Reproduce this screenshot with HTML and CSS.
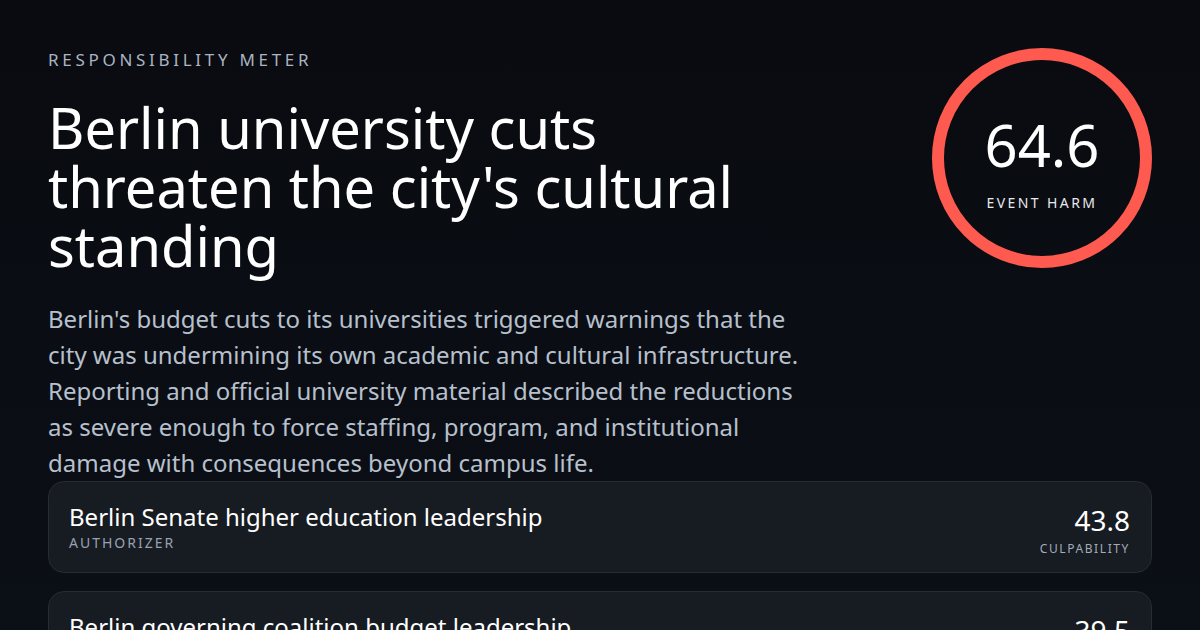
FILE: index.html
```html
<!DOCTYPE html>
<html lang="en">
<head>
<meta charset="utf-8">
<link rel="stylesheet" href="styles.css">
</head>
<body>
<main class="page">
  <section class="hero">
    <div class="intro">
      <div class="eyebrow">RESPONSIBILITY METER</div>
      <h1 class="title">Berlin university cuts threaten the city's cultural standing</h1>
      <p class="summary">Berlin's budget cuts to its universities triggered warnings that the city was undermining its own academic and cultural infrastructure. Reporting and official university material described the reductions as severe enough to force staffing, program, and institutional damage with consequences beyond campus life.</p>
    </div>
    <div class="meter">
      <div class="meter-value">64.6</div>
      <div class="meter-label">EVENT HARM</div>
    </div>
  </section>
  <section class="actors">
    <div class="actor">
      <div class="actor-info">
        <div class="actor-name">Berlin Senate higher education leadership</div>
        <div class="actor-role">AUTHORIZER</div>
      </div>
      <div class="actor-score">
        <div class="score-value">43.8</div>
        <div class="score-label">CULPABILITY</div>
      </div>
    </div>
    <div class="actor">
      <div class="actor-info">
        <div class="actor-name">Berlin governing coalition budget leadership</div>
        <div class="actor-role">DECISION MAKER</div>
      </div>
      <div class="actor-score">
        <div class="score-value">39.5</div>
        <div class="score-label">CULPABILITY</div>
      </div>
    </div>
  </section>
</main>
</body>
</html>
```
FILE: styles.css
```css
* { box-sizing: border-box; }
html, body { margin: 0; padding: 0; }
body {
  width: 1200px;
  height: 630px;
  overflow: hidden;
  background: linear-gradient(180deg, #090b10 0%, #0b0f16 100%);
  font-family: "Noto Sans", "DejaVu Sans", sans-serif;
  color: #ffffff;
}
.page {
  padding: 48px 48px 0 48px;
}
.hero {
  display: flex;
  justify-content: space-between;
  align-items: flex-start;
}
.intro {
  width: 780px;
}
.eyebrow {
  font-size: 17px;
  line-height: 24px;
  letter-spacing: 3.7px;
  color: #aab4c2;
}
.title {
  margin: 26px 0 0 0;
  font-size: 56px;
  line-height: 59px;
  font-weight: 400;
  color: #ffffff;
  width: 720px;
}
.summary {
  margin: 26px 0 0 0;
  font-size: 24px;
  line-height: 36px;
  color: #b7c0cd;
  width: 770px;
}
.meter {
  width: 220px;
  height: 220px;
  border-radius: 50%;
  border: 12px solid #ff5a50;
  display: flex;
  flex-direction: column;
  align-items: center;
  justify-content: center;
  flex-shrink: 0;
}
.meter-value {
  font-size: 58px;
  line-height: 64px;
  margin-top: 8px;
}
.meter-label {
  font-size: 14px;
  line-height: 19px;
  letter-spacing: 2.4px;
  margin-top: 16px;
  color: #e6e9ee;
}
.actors {
  margin-top: 0;
  display: flex;
  flex-direction: column;
  gap: 18px;
}
.actor {
  height: 92px;
  flex-shrink: 0;
  border: 1px solid #262b34;
  border-radius: 16px;
  background: #171b22;
  display: flex;
  justify-content: space-between;
  align-items: center;
  padding: 0 21px 0 20px;
}
.actor-name {
  font-size: 24px;
  line-height: 30px;
}
.actor-role {
  font-size: 14px;
  line-height: 19px;
  letter-spacing: 2px;
  color: #98a2b0;
  margin-top: 1px;
}
.actor-score {
  text-align: right;
  margin-top: 6px;
}
.score-value {
  font-size: 28px;
  line-height: 32px;
}
.score-label {
  font-size: 12px;
  line-height: 16px;
  letter-spacing: 1.6px;
  color: #a3acb8;
  margin-top: 5px;
}
```
